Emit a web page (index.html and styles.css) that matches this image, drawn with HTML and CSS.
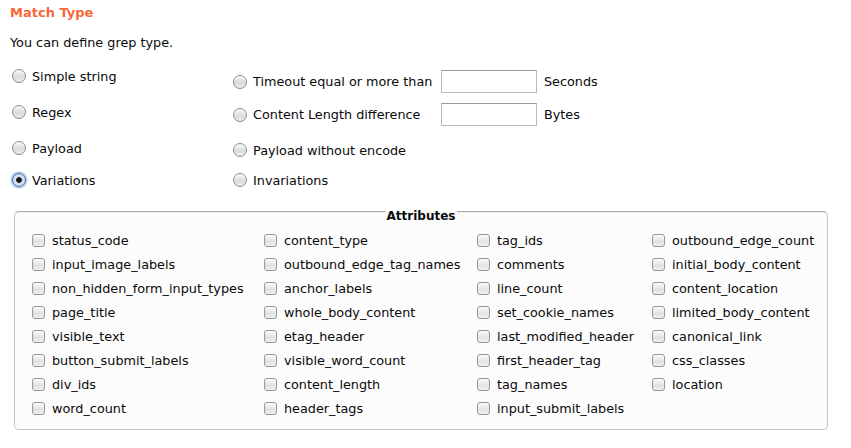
FILE: index.html
```html
<!DOCTYPE html>
<html>
<head>
<meta charset="utf-8">
<link rel="stylesheet" href="styles.css">
</head>
<body>
<div class="page">
  <h1 class="title">Match Type</h1>
  <p class="desc">You can define grep type.</p>
  <div class="types">
    <div class="col1">
      <label class="opt"><span class="radio"></span>Simple string</label>
      <label class="opt"><span class="radio"></span>Regex</label>
      <label class="opt"><span class="radio"></span>Payload</label>
      <label class="opt"><span class="radio on"></span>Variations</label>
    </div>
    <div class="col2">
      <div class="row-in"><label class="opt lab"><span class="radio"></span>Timeout equal or more than</label><span class="field"></span><span class="unit">Seconds</span></div>
      <div class="row-in"><label class="opt lab"><span class="radio"></span>Content Length difference</label><span class="field"></span><span class="unit">Bytes</span></div>
      <label class="opt"><span class="radio"></span>Payload without encode</label>
      <label class="opt"><span class="radio"></span>Invariations</label>
    </div>
  </div>
  <fieldset class="attrs">
    <legend class="legend">Attributes</legend>
    <div class="grid">
      <div class="cb"><span class="box"></span>status_code</div>
      <div class="cb"><span class="box"></span>content_type</div>
      <div class="cb"><span class="box"></span>tag_ids</div>
      <div class="cb"><span class="box"></span>outbound_edge_count</div>
      <div class="cb"><span class="box"></span>input_image_labels</div>
      <div class="cb"><span class="box"></span>outbound_edge_tag_names</div>
      <div class="cb"><span class="box"></span>comments</div>
      <div class="cb"><span class="box"></span>initial_body_content</div>
      <div class="cb"><span class="box"></span>non_hidden_form_input_types</div>
      <div class="cb"><span class="box"></span>anchor_labels</div>
      <div class="cb"><span class="box"></span>line_count</div>
      <div class="cb"><span class="box"></span>content_location</div>
      <div class="cb"><span class="box"></span>page_title</div>
      <div class="cb"><span class="box"></span>whole_body_content</div>
      <div class="cb"><span class="box"></span>set_cookie_names</div>
      <div class="cb"><span class="box"></span>limited_body_content</div>
      <div class="cb"><span class="box"></span>visible_text</div>
      <div class="cb"><span class="box"></span>etag_header</div>
      <div class="cb"><span class="box"></span>last_modified_header</div>
      <div class="cb"><span class="box"></span>canonical_link</div>
      <div class="cb"><span class="box"></span>button_submit_labels</div>
      <div class="cb"><span class="box"></span>visible_word_count</div>
      <div class="cb"><span class="box"></span>first_header_tag</div>
      <div class="cb"><span class="box"></span>css_classes</div>
      <div class="cb"><span class="box"></span>div_ids</div>
      <div class="cb"><span class="box"></span>content_length</div>
      <div class="cb"><span class="box"></span>tag_names</div>
      <div class="cb"><span class="box"></span>location</div>
      <div class="cb"><span class="box"></span>word_count</div>
      <div class="cb"><span class="box"></span>header_tags</div>
      <div class="cb"><span class="box"></span>input_submit_labels</div>
    </div>
  </fieldset>
</div>
</body>
</html>
```

FILE: styles.css
```css
html, body {
  margin: 0;
  padding: 0;
  background: #ffffff;
}
body {
  font-family: "DejaVu Sans", "Liberation Sans", sans-serif;
  font-size: 12.8px;
  color: #0a0a0a;
  width: 851px;
  height: 448px;
  overflow: hidden;
}
.page {
  padding: 4px 0 0 10px;
}
.title {
  margin: 0;
  font-size: 13px;
  font-weight: bold;
  color: #f8693a;
  line-height: 18px;
}
.desc {
  margin: 12px 0 0 0;
  line-height: 18px;
}
.types {
  display: flex;
  align-items: flex-start;
}
.col1 {
  width: 221px;
  margin-left: 2px;
  margin-top: 14px;
  display: grid;
  grid-template-rows: 36px 36px 32px 20px;
}
.col2 {
  margin-top: 18px;
  display: grid;
  grid-template-rows: 33px 37px 30px 20px;
}
.opt {
  display: flex;
  align-items: center;
  height: 20px;
  gap: 6px;
}
.row-in {
  display: flex;
  align-items: center;
  height: 23px;
}
.lab {
  width: 208px;
}
.radio {
  width: 14px;
  height: 14px;
  box-sizing: border-box;
  border-radius: 50%;
  border: 1px solid #8a8a8a;
  background: linear-gradient(#f6f6f6, #dadada 60%, #f0f0f0);
  box-shadow: inset 0 1px 1px rgba(255,255,255,0.9);
  flex: none;
}
.radio.on {
  border-color: #4a6ea6;
  background: radial-gradient(circle, #1a1a1a 0, #1a1a1a 2.5px, #d8e4f3 3.2px, #c4d6ee 100%);
  box-shadow: 0 0 2px 1px rgba(92,148,222,0.75);
}
.field {
  width: 96px;
  height: 23px;
  box-sizing: border-box;
  border: 1px solid #b9b9b9;
  border-top-color: #9a9a9a;
  background: #fff;
  flex: none;
}
.unit {
  margin-left: 7px;
}
.attrs {
  margin: 9px 0 0 4px;
  width: 814px;
  box-sizing: border-box;
  border: 1px solid #c4c4c4;
  border-top-color: #a9a9a9;
  border-radius: 5px;
  padding: 14px 0 9px 0;
  background: #fcfcfc;
  box-shadow: inset 0 1px 1px rgba(0,0,0,0.06);
}
.legend {
  margin: 0 auto;
  padding: 10px 2px 0 2px;
  font-size: 12px;
  font-weight: bold;
  line-height: 14px;
}
.grid {
  display: grid;
  grid-template-columns: 232px 213px 175px auto;
  grid-auto-rows: 24px;
  margin-top: -9px;
  padding-left: 17px;
}
.cb {
  display: flex;
  align-items: center;
  gap: 7px;
  white-space: nowrap;
}
.box {
  width: 13px;
  height: 13px;
  box-sizing: border-box;
  border: 1px solid #969696;
  border-radius: 3px;
  background: linear-gradient(#fbfbfb, #e2e2e2 60%, #f0f0f0);
  flex: none;
}
```
